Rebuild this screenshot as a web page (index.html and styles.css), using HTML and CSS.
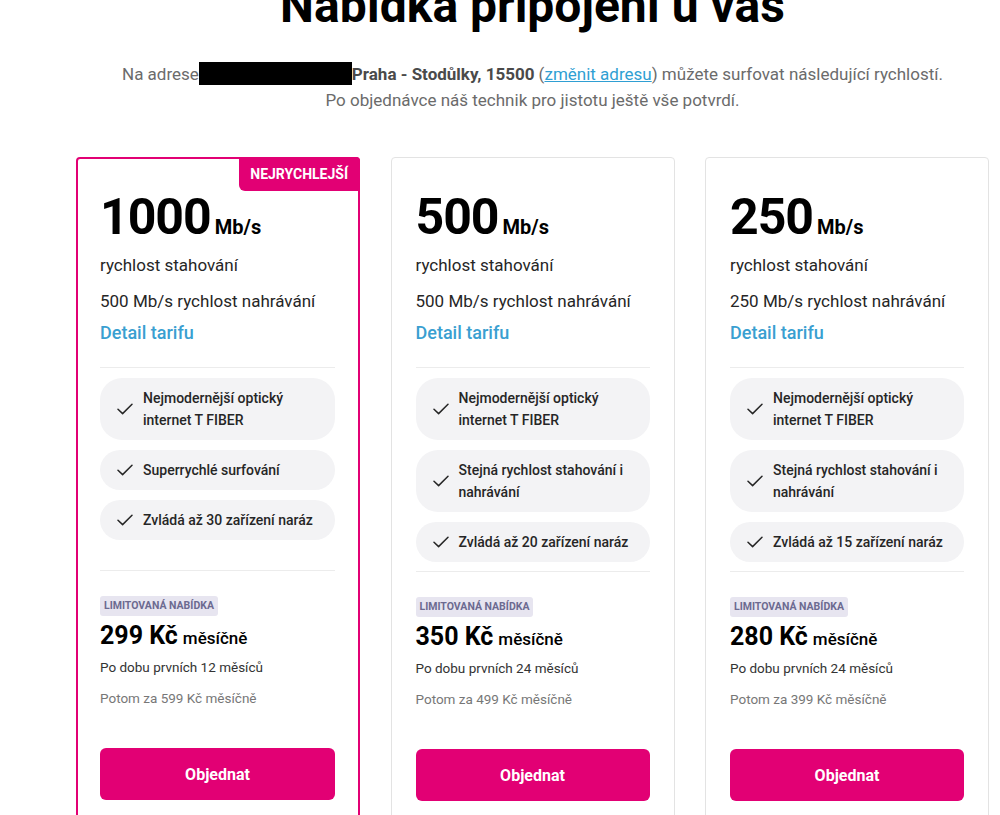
FILE: index.html
```html
<!DOCTYPE html>
<html lang="cs">
<head>
<meta charset="utf-8">
<title>Nabídka připojení u vás</title>
<link rel="stylesheet" href="styles.css">
</head>
<body>
<div class="page">
  <h1 class="title">Nabídka připojení u vás</h1>
  <p class="intro">Na adrese<span class="redacted"></span><strong>Praha - Stodůlky, 15500</strong> (<a href="#" class="link">změnit adresu</a>) můžete surfovat následující rychlostí.<br>Po objednávce náš technik pro jistotu ještě vše potvrdí.</p>

  <div class="cards">
    <div class="card card-featured">
      <div class="flag">NEJRYCHLEJŠÍ</div>
      <div class="card-head">
        <div class="speed"><span class="speed-num">1000</span><span class="speed-unit">Mb/s</span></div>
        <div class="down">rychlost stahování</div>
        <div class="up">500 Mb/s rychlost nahrávání</div>
        <a href="#" class="detail">Detail tarifu</a>
      </div>
      <ul class="features">
        <li class="pill"><svg class="check" viewBox="0 0 16 12"><path d="M1 6.2 L5.6 10.6 L15 1.2"/></svg><span>Nejmodernější optický internet T FIBER</span></li>
        <li class="pill"><svg class="check" viewBox="0 0 16 12"><path d="M1 6.2 L5.6 10.6 L15 1.2"/></svg><span>Superrychlé surfování</span></li>
        <li class="pill"><svg class="check" viewBox="0 0 16 12"><path d="M1 6.2 L5.6 10.6 L15 1.2"/></svg><span>Zvládá až 30 zařízení naráz</span></li>
      </ul>
      <div class="price-block">
        <span class="tag">LIMITOVANÁ NABÍDKA</span>
        <div class="price"><span class="price-num">299 Kč</span><span class="price-per">měsíčně</span></div>
        <div class="period">Po dobu prvních 12 měsíců</div>
        <div class="after">Potom za 599 Kč měsíčně</div>
        <button class="order">Objednat</button>
      </div>
    </div>

    <div class="card">
      <div class="card-head">
        <div class="speed"><span class="speed-num">500</span><span class="speed-unit">Mb/s</span></div>
        <div class="down">rychlost stahování</div>
        <div class="up">500 Mb/s rychlost nahrávání</div>
        <a href="#" class="detail">Detail tarifu</a>
      </div>
      <ul class="features">
        <li class="pill"><svg class="check" viewBox="0 0 16 12"><path d="M1 6.2 L5.6 10.6 L15 1.2"/></svg><span>Nejmodernější optický internet T FIBER</span></li>
        <li class="pill"><svg class="check" viewBox="0 0 16 12"><path d="M1 6.2 L5.6 10.6 L15 1.2"/></svg><span>Stejná rychlost stahování i nahrávání</span></li>
        <li class="pill"><svg class="check" viewBox="0 0 16 12"><path d="M1 6.2 L5.6 10.6 L15 1.2"/></svg><span>Zvládá až 20 zařízení naráz</span></li>
      </ul>
      <div class="price-block">
        <span class="tag">LIMITOVANÁ NABÍDKA</span>
        <div class="price"><span class="price-num">350 Kč</span><span class="price-per">měsíčně</span></div>
        <div class="period">Po dobu prvních 24 měsíců</div>
        <div class="after">Potom za 499 Kč měsíčně</div>
        <button class="order">Objednat</button>
      </div>
    </div>

    <div class="card">
      <div class="card-head">
        <div class="speed"><span class="speed-num">250</span><span class="speed-unit">Mb/s</span></div>
        <div class="down">rychlost stahování</div>
        <div class="up">250 Mb/s rychlost nahrávání</div>
        <a href="#" class="detail">Detail tarifu</a>
      </div>
      <ul class="features">
        <li class="pill"><svg class="check" viewBox="0 0 16 12"><path d="M1 6.2 L5.6 10.6 L15 1.2"/></svg><span>Nejmodernější optický internet T FIBER</span></li>
        <li class="pill"><svg class="check" viewBox="0 0 16 12"><path d="M1 6.2 L5.6 10.6 L15 1.2"/></svg><span>Stejná rychlost stahování i nahrávání</span></li>
        <li class="pill"><svg class="check" viewBox="0 0 16 12"><path d="M1 6.2 L5.6 10.6 L15 1.2"/></svg><span>Zvládá až 15 zařízení naráz</span></li>
      </ul>
      <div class="price-block">
        <span class="tag">LIMITOVANÁ NABÍDKA</span>
        <div class="price"><span class="price-num">280 Kč</span><span class="price-per">měsíčně</span></div>
        <div class="period">Po dobu prvních 24 měsíců</div>
        <div class="after">Potom za 399 Kč měsíčně</div>
        <button class="order">Objednat</button>
      </div>
    </div>
  </div>
</div>
</body>
</html>
```

FILE: styles.css
```css
* { box-sizing: border-box; }

html, body {
  margin: 0;
  padding: 0;
  background: #ffffff;
  overflow: hidden;
}

body {
  font-family: Roboto, "Liberation Sans", Arial, sans-serif;
  color: #262626;
}

.page {
  width: 913px;
  margin-left: 76px;
}

.title {
  margin: -21px 0 0;
  font-size: 48px;
  line-height: 54px;
  font-weight: 700;
  color: #000;
  text-align: center;
  letter-spacing: 0;
}

.intro {
  margin: 28px 0 0;
  font-size: 17px;
  line-height: 26px;
  color: #6b6b6b;
  text-align: center;
}

.redacted {
  display: inline-block;
  width: 153px;
  height: 23px;
  background: #000;
  vertical-align: -5px;
}

.intro strong {
  color: #4a4a4a;
  font-weight: 700;
}

.link {
  color: #2f9fd3;
  text-decoration: underline;
}

.cards {
  margin-top: 44px;
  display: grid;
  grid-template-columns: 284px 284px 284px;
  column-gap: 30.5px;
}

.card {
  position: relative;
  display: flex;
  flex-direction: column;
  border: 1px solid #e3e3e3;
  border-radius: 4px;
  padding: 29px 24px 40px;
  background: #fff;
}

.card-featured {
  border: 2px solid #e20074;
  padding: 28px 23px 40px 22px;
}

.flag {
  position: absolute;
  top: -2px;
  right: -2px;
  background: #e20074;
  color: #fff;
  font-weight: 700;
  font-size: 14px;
  line-height: 34px;
  padding: 0 12px 0 11px;
  border-radius: 0 4px 0 6px;
}

.card-head {
  border-bottom: 1px solid #ececec;
  padding-bottom: 22px;
}

.speed {
  display: flex;
  align-items: baseline;
  gap: 4px;
  height: 60px;
  line-height: 60px;
}

.speed-num {
  font-size: 50px;
  font-weight: 700;
  color: #000;
  letter-spacing: -1px;
}

.speed-unit {
  font-size: 20px;
  font-weight: 700;
  color: #000;
}

.down {
  margin-top: 6px;
  font-size: 17px;
  line-height: 24px;
}

.up {
  margin-top: 12px;
  font-size: 17px;
  line-height: 24px;
}

.detail {
  display: block;
  margin-top: 8px;
  font-size: 18px;
  line-height: 24px;
  font-weight: 500;
  color: #3a9fd1;
  text-decoration: none;
}

.features {
  list-style: none;
  margin: 0;
  padding: 10px 0 9px;
  flex: 1;
  display: flex;
  flex-direction: column;
  gap: 10px;
  border-bottom: 1px solid #ececec;
}

.pill {
  display: flex;
  align-items: center;
  gap: 10px;
  background: #f3f3f5;
  border-radius: 22px;
  padding: 9px 16px 9px 17px;
  font-size: 14px;
  line-height: 22px;
  font-weight: 500;
  color: #262626;
}

.check {
  flex: 0 0 16px;
  width: 16px;
  height: 12px;
  fill: none;
  stroke: #262626;
  stroke-width: 1.5;
  stroke-linecap: round;
  stroke-linejoin: round;
}

.price-block {
  padding-top: 25px;
}

.tag {
  display: block;
  width: max-content;
  background: #e7e5f0;
  color: #6c6a90;
  font-size: 10.5px;
  font-weight: 700;
  line-height: 20px;
  padding: 0 4px;
  border-radius: 3px;
}

.price {
  margin-top: 5px;
  display: flex;
  align-items: baseline;
  gap: 5px;
  line-height: 30px;
}

.price-num {
  font-size: 25px;
  font-weight: 700;
  color: #000;
}

.price-per {
  font-size: 17px;
  font-weight: 500;
  color: #000;
}

.period {
  margin-top: 3px;
  font-size: 13.5px;
  line-height: 22px;
  color: #333;
}

.after {
  margin-top: 9px;
  font-size: 13.5px;
  line-height: 22px;
  color: #777;
}

.order {
  display: block;
  width: 100%;
  margin-top: 39px;
  height: 52px;
  border: 0;
  border-radius: 6px;
  background: #e20074;
  color: #fff;
  font-family: inherit;
  font-size: 16px;
  font-weight: 700;
}
```
